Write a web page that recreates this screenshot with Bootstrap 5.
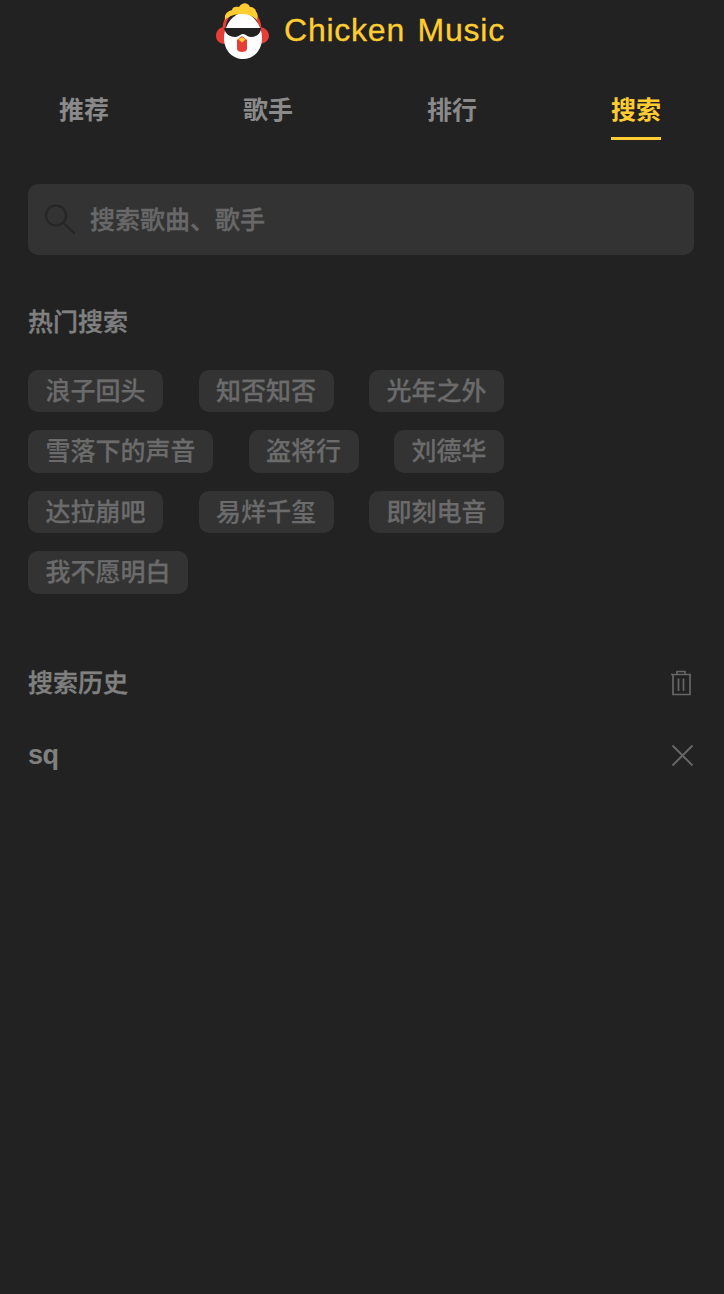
<!DOCTYPE html>
<html lang="zh">
<head>
<meta charset="utf-8">
<title>Chicken Music</title>
<link rel="stylesheet" href="https://cdn.jsdelivr.net/npm/bootstrap@5.3.0/dist/css/bootstrap.min.css">
<style>
html,body{height:100%}
body{background:#222;font-family:"Liberation Sans","Noto Sans CJK SC",sans-serif;overflow:hidden}
.app-head{height:60px;gap:15px}
.app-logo{width:54px;height:60px;flex:none}
.app-title{font-size:32px;line-height:60px;color:#ffcd32;letter-spacing:.75px;word-spacing:3px;-webkit-text-stroke:.3px #ffcd32}
.tab-bar{padding:20px 63px 0 59px;height:80px}
.tab-item{width:50px;height:60px;font-size:25px;font-weight:700;line-height:60px;color:#8a8a8a;white-space:nowrap;text-decoration:none;border-bottom:3px solid transparent}
.tab-item.on{color:#ffcd32;border-bottom-color:#ffcd32}
.page-pad{padding:0 30px 0 28px}
.find-box{margin-top:44px;height:71px;background:#333;border-radius:10px;padding:3px 0 0 16px;gap:14px}
.find-glyph{margin-top:-3px;margin-left:1px;margin-right:-1px}
.find-text{font-size:25px;color:#686868;font-weight:500;-webkit-text-stroke:.4px #686868}
.sec-title{font-size:25px;line-height:36px;font-weight:500;color:#808080;-webkit-text-stroke:.4px #808080}
.hot-head{margin-top:49px}
.tag-wrap{margin-top:29.500px}
.tag-item{height:42.500px;line-height:42px;padding:0 17.600px;margin:0 35.300px 18px 0;background:#333;border-radius:10px;font-size:25px;font-weight:500;color:#6b6b6b;white-space:nowrap;-webkit-text-stroke:.25px #6b6b6b}
.hist-head{margin-top:53.500px}
.hist-row{margin-top:35px;height:38px}
.hist-word{font-size:27px;font-weight:700;color:#808080;letter-spacing:-.5px}
.trash-glyph{margin-right:2px}
</style>
</head>
<body>
<header class="app-head d-flex align-items-start justify-content-center pe-1">
<svg class="app-logo" viewBox="0 0 54 60" aria-hidden="true">
<path d="M10 27 C4 27 1 31 1 36 C1 40 4 44 10 44Z M44 27 C50 27 54 31 54 36 C54 40 50 44 44 44Z" fill="#e63e36"/>
<path d="M9 29 C9 21 12 17 15 14 M45 29 C45 21 42 17 39 14" fill="none" stroke="#e63e36" stroke-width="3"/>
<path d="M28 13 C38 13 47 26 47 38 C47 51 38 59 28 59 C18 59 9 51 9 38 C9 26 18 13 28 13Z" fill="#fff"/>
<path d="M10 19 C9 13 14 11 17 10 C17 7 21 6 24 7 C27 2 33 2 35 7 C38 7 41 9 41 12 C43 13 43 17 42 20 C38 16 33 14 27 14 C20 14 14 16 10 20Z" fill="#ffcd32"/>
<path d="M9 28 L46 28 C46 33 42 37 36 37 C32 37 31 34 28 34 C25 34 24 37 20 37 C14 37 10 33 9 28Z" fill="#222"/>
<path d="M22 40 L27 36 L32 40 L32 49 C32 53 22 53 22 49Z" fill="#e63e36"/>
<path d="M23.500 39.500 L27 37 L30.500 39.500 L27 42.500Z" fill="#ffcd32"/>
</svg>
<span class="app-title">Chicken Music</span>
</header>
<nav class="tab-bar d-flex justify-content-between">
<a class="tab-item text-center" href="#">推荐</a>
<a class="tab-item text-center" href="#">歌手</a>
<a class="tab-item text-center" href="#">排行</a>
<a class="tab-item on text-center" href="#">搜索</a>
</nav>
<main class="page-pad">
<div class="find-box d-flex align-items-center">
<svg class="find-glyph" width="32" height="32" viewBox="0 0 32 32" fill="none" stroke="#262626" stroke-width="2.200" aria-hidden="true"><circle cx="11" cy="11.500" r="10"/><path d="M18.500 19 L29 29" stroke-linecap="round"/></svg>
<span class="find-text">搜索歌曲、歌手</span>
</div>
<div class="sec-title hot-head">热门搜索</div>
<div class="tag-wrap d-flex flex-wrap">
<span class="tag-item">浪子回头</span><span class="tag-item">知否知否</span><span class="tag-item">光年之外</span>
<span class="tag-item">雪落下的声音</span><span class="tag-item">盗将行</span><span class="tag-item">刘德华</span>
<span class="tag-item">达拉崩吧</span><span class="tag-item">易烊千玺</span><span class="tag-item">即刻电音</span>
<span class="tag-item">我不愿明白</span>
</div>
<div class="hist-head d-flex justify-content-between align-items-center">
<span class="sec-title">搜索历史</span>
<svg class="trash-glyph" width="22" height="26" viewBox="0 0 22 26" fill="none" stroke="#666" stroke-width="1.700" aria-hidden="true"><path d="M1 4.500H21M7 4.500V1.500H15V4.500M3 4.500V24.500H20V4.500M8.500 8.500V21M13.500 8.500V21"/></svg>
</div>
<div class="hist-row d-flex justify-content-between align-items-center">
<span class="hist-word">sq</span>
<svg width="24" height="24" viewBox="0 0 24 24" fill="none" stroke="#666" stroke-width="2" aria-hidden="true"><path d="M2.500 2.500L22.500 22.500M22.500 2.500L2.500 22.500"/></svg>
</div>
</main>
<script src="https://cdn.jsdelivr.net/npm/bootstrap@5.3.0/dist/js/bootstrap.bundle.min.js"></script>
</body>
</html>
